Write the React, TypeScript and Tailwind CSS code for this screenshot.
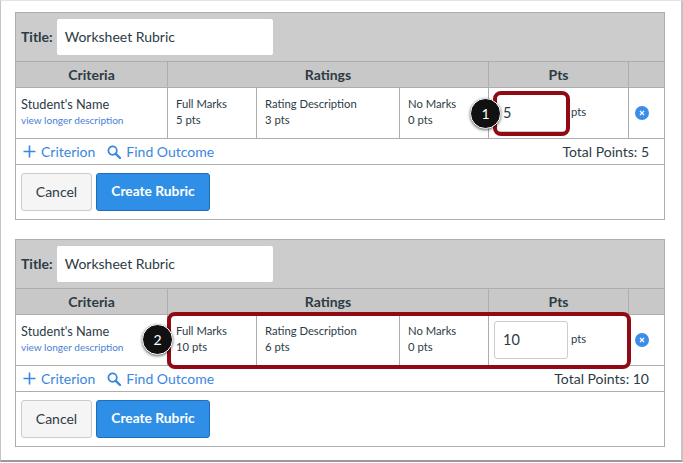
import React from "react";

function PlusIcon() {
  return (
    <svg width="13" height="13" viewBox="0 0 13 13" className="shrink-0">
      <path d="M6.5 0.5v12M0.5 6.5h12" stroke="#3b86e0" strokeWidth="1.6" fill="none" />
    </svg>
  );
}

function SearchIcon() {
  return (
    <svg width="14" height="14" viewBox="0 0 14 14" className="shrink-0">
      <circle cx="5.6" cy="5.6" r="4.2" stroke="#3b86e0" strokeWidth="1.8" fill="none" />
      <path d="M8.8 8.8l4.2 4.2" stroke="#3b86e0" strokeWidth="2.4" strokeLinecap="round" fill="none" />
    </svg>
  );
}

function RemoveIcon() {
  return (
    <svg width="14" height="14" viewBox="0 0 14 14" className="shrink-0">
      <circle cx="7" cy="7" r="7" fill="#3b8ee8" />
      <path d="M5 5l4 4M9 5l-4 4" stroke="#ffffff" strokeWidth="1.2" fill="none" />
    </svg>
  );
}

function Badge({ n, className }: { n: string; className: string }) {
  return (
    <div
      className={`absolute flex h-[31px] w-[31px] items-center justify-center rounded-full border border-white bg-[#111111] text-[14px] text-white shadow-[0_1px_3px_rgba(0,0,0,0.6)] ${className}`}
    >
      {n}
    </div>
  );
}

function Rating({ title, pts }: { title: string; pts: string }) {
  return (
    <div className="flex flex-col border-r border-[#adadad] pl-[8px] pt-[8px] text-[11.25px] leading-[16px] text-[#2d3b45]">
      <span>{title}</span>
      <span>{pts}</span>
    </div>
  );
}

function Panel({ pts, full, mid, total }: { pts: string; full: string; mid: string; total: string }) {
  return (
    <section className="w-[650px] border border-[#adadad] bg-white text-[#2d3b45]">
      <div className="flex h-[49px] items-center gap-[4px] border-b border-[#adadad] bg-[#cccccc] pl-[5px]">
        <span className="mb-[2px] text-[14px] font-bold">Title:</span>
        <div className="flex h-[36px] w-[216px] items-center rounded-[2px] bg-white pb-[1px] pl-[8px] text-[14px]">Worksheet Rubric</div>
      </div>
      <div className="grid h-[26px] grid-cols-[152px_321px_140px_1fr] border-b border-[#adadad] bg-[#c8c8c8] text-center text-[14px] font-bold">
        <div className="flex items-center justify-center border-r border-[#adadad]">Criteria</div>
        <div className="flex items-center justify-center border-r border-[#adadad]">Ratings</div>
        <div className="flex items-center justify-center border-r border-[#adadad]">Pts</div>
        <div />
      </div>
      <div className="grid h-[51px] grid-cols-[152px_89px_143px_89px_140px_1fr] border-b border-[#adadad]">
        <div className="flex flex-col border-r border-[#adadad] pl-[5px] pt-[8px]">
          <span className="text-[12.75px] leading-[16px]">Student's Name</span>
          <span className="mt-[1px] text-[10.05px] leading-[15px] text-[#4a7fd6]">view longer description</span>
        </div>
        <Rating title="Full Marks" pts={full} />
        <Rating title="Rating Description" pts={mid} />
        <Rating title="No Marks" pts="0 pts" />
        <div className="flex items-center gap-[3px] border-r border-[#adadad] pl-[5px]">
          <div className="flex h-[38px] w-[74px] items-center rounded-[3px] border border-[#cccccc] bg-white pl-[8px] text-[14.5px]">{pts}</div>
          <span className="mb-[2px] text-[11.25px]">pts</span>
        </div>
        <div className="flex items-center pl-[6px]">
          <RemoveIcon />
        </div>
      </div>
      <div className="flex h-[26px] items-center border-b border-[#adadad] pl-[7px] pr-[15px] text-[14px] text-[#3b86e0]">
        <PlusIcon />
        <span className="ml-[5px]">Criterion</span>
        <span className="ml-[12px]"><SearchIcon /></span>
        <span className="ml-[5px]">Find Outcome</span>
        <span className="ml-auto text-[14px] text-[#2d3b45]">Total Points: {total}</span>
      </div>
      <div className="flex h-[54px] items-start gap-[4px] pl-[5px] pt-[8px]">
        <button className="h-[38px] w-[71px] rounded-[3px] border border-[#c7cdd1] bg-[#f5f5f5] pb-[2px] text-[14px] text-[#2d3b45]">Cancel</button>
        <button className="h-[38px] w-[114px] rounded-[3px] border border-[#1f6fb8] bg-[#2f8fe6] pb-[2px] text-[13.75px] font-bold text-white">Create Rubric</button>
      </div>
    </section>
  );
}

export default function App() {
  return (
    <div className="h-[463px] w-[683px] bg-white [font-family:Lato,'Noto_Sans',sans-serif]">
      <div className="relative h-[462px] w-[683px] border-b-2 border-l border-r-2 border-t border-b-[#9a9a9a] border-l-[#c4c4c4] border-r-[#c4c4c4] border-t-[#e4e4e4] pl-[14px] pt-[11px]">
        <div className="flex flex-col gap-[19px]">
          <Panel pts="5" full="5 pts" mid="3 pts" total="5" />
          <Panel pts="10" full="10 pts" mid="6 pts" total="10" />
        </div>
        <div className="absolute left-[492px] top-[90px] h-[45px] w-[77px] rounded-[8px] border-[4px] border-[#8f0a12]" />
        <Badge n="1" className="left-[469px] top-[97px]" />
        <div className="absolute left-[166px] top-[311px] h-[57px] w-[464px] rounded-[8px] border-[4px] border-[#8f0a12]" />
        <Badge n="2" className="left-[141px] top-[323px]" />
      </div>
    </div>
  );
}
